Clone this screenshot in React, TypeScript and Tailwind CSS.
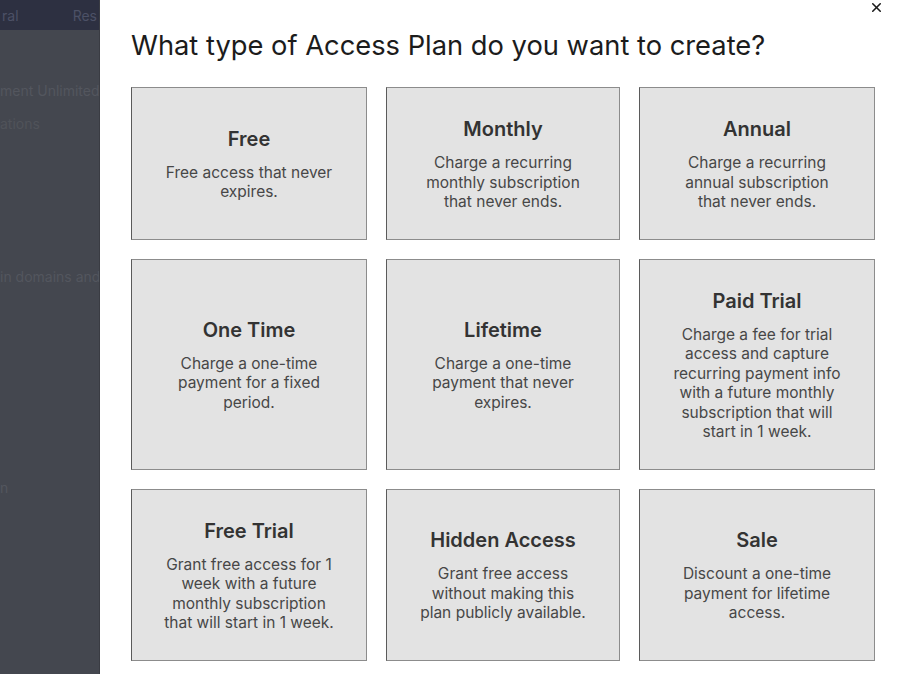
import { X } from "lucide-react";

interface Plan {
  title: string;
  description: string;
}

const plans: Plan[] = [
  { title: "Free", description: "Free access that never expires." },
  { title: "Monthly", description: "Charge a recurring monthly subscription that never ends." },
  { title: "Annual", description: "Charge a recurring annual subscription that never ends." },
  { title: "One Time", description: "Charge a one-time payment for a fixed period." },
  { title: "Lifetime", description: "Charge a one-time payment that never expires." },
  {
    title: "Paid Trial",
    description:
      "Charge a fee for trial access and capture recurring payment info with a future monthly subscription that will start in 1 week.",
  },
  {
    title: "Free Trial",
    description: "Grant free access for 1 week with a future monthly subscription that will start in 1 week.",
  },
  { title: "Hidden Access", description: "Grant free access without making this plan publicly available." },
  { title: "Sale", description: "Discount a one-time payment for lifetime access." },
];

function PlanCard({ plan }: { plan: Plan }) {
  return (
    <button
      type="button"
      className="flex flex-col items-center justify-center px-[31px] py-[27px] bg-[#e3e3e3] border border-[#8c8c8c] border-l-[#5a5a5a] text-center"
    >
      <h3 className="text-[20px] leading-[28px] font-semibold text-[#333333]">{plan.title}</h3>
      <p className="mt-[10px] text-[15.5px] leading-[19.5px] text-[#474747]">{plan.description}</p>
    </button>
  );
}

export default function App() {
  return (
    <div
      className="flex w-[900px] h-[674px] overflow-hidden bg-white"
      style={{ fontFamily: "Inter, 'Noto Sans', sans-serif" }}
    >
      {/* dimmed page behind the modal */}
      <div className="flex flex-col w-[100px] shrink-0 overflow-hidden bg-[#44474f] border-r border-[#3a3c43]">
        <div className="flex items-center justify-between h-[30px] bg-[#2d3041] text-[14px] text-[#4c5166]">
          <span className="pl-[2px]">ral</span>
          <span className="pr-[2px]">Res</span>
        </div>
        <div className="mt-[50px] text-[14px] text-[#53565e] whitespace-nowrap">ment Unlimited</div>
        <div className="mt-[12px] text-[14px] text-[#50535a]">ations</div>
        <div className="mt-[132px] text-[14px] text-[#53565e] whitespace-nowrap">in domains and</div>
        <div className="mt-[190px] text-[14px] text-[#53565e]">n</div>
      </div>

      {/* modal */}
      <div className="relative flex-1 pl-[31px] pr-[25px]">
        <button type="button" className="absolute top-[0px] right-[16px] text-[#1a1a1a]">
          <X className="w-[15px] h-[15px]" strokeWidth={2.5} />
        </button>
        <h2 className="mt-[28px] text-[27.3px] leading-[36px] text-[#1c1c1c]">
          What type of Access Plan do you want to create?
        </h2>
        <div className="mt-[23px] grid grid-cols-[236px_234px_236px] gap-[19px]">
          {plans.map((plan) => (
            <PlanCard key={plan.title} plan={plan} />
          ))}
        </div>
      </div>
    </div>
  );
}
